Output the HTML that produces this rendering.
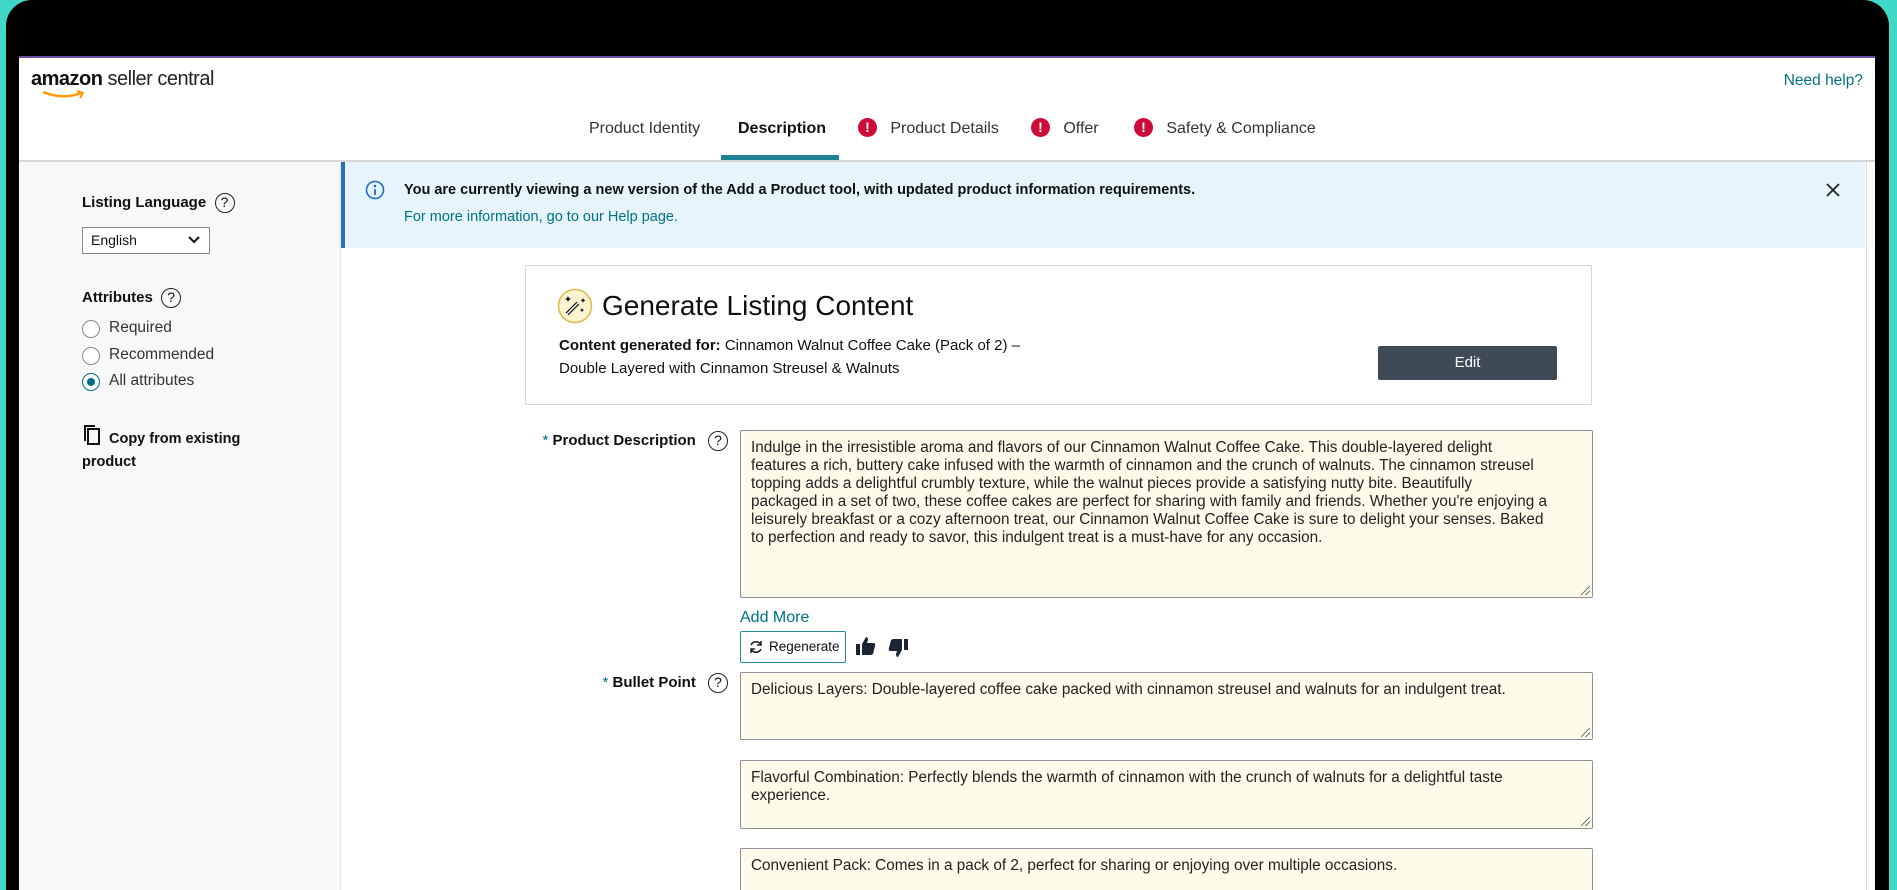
<!DOCTYPE html>
<html><head><meta charset="utf-8"><style>
*{box-sizing:border-box;margin:0;padding:0}
html,body{width:1897px;height:890px;overflow:hidden}
body{background:#40d9c8;font-family:"Liberation Sans",sans-serif;color:#0f1111;position:relative}
.frame{position:absolute;left:6px;top:0;width:1883px;height:890px;background:#000;border-radius:26px 26px 0 0}
.screen{position:absolute;left:19px;top:56px;width:1856px;height:834px;background:#fff;border-top:2px solid #6b4fa0;overflow:hidden}
.a{position:absolute;white-space:nowrap}
.hdr{position:absolute;left:0;top:0;width:1856px;height:104px;border-bottom:2px solid #d5d9d9;background:#fff}
.side{position:absolute;left:0;top:104px;width:322px;height:800px;background:#f7f8f8;border-right:1px solid #e3e6e6}
.help{display:inline-block;width:20px;height:20px;border:1.7px solid #222;border-radius:50%;font-size:14px;text-align:center;line-height:17px;font-weight:normal}
.radio{position:absolute;width:18px;height:18px;border:1.5px solid #888;border-radius:50%;background:#fff}
.alert{display:inline-block;width:19px;height:19px;border-radius:50%;background:#cc0c39;color:#fff;font-size:14px;font-weight:bold;text-align:center;line-height:19px;vertical-align:1px}
.ta{position:absolute;left:721px;width:853px;background:#fffbea;border:1.5px solid #8d9096;border-radius:2px;font-size:15.3px;line-height:18px;padding:8px 10px;white-space:nowrap;color:#222}
.ta:after{content:"";position:absolute;right:2px;bottom:2px;width:9px;height:9px;background:linear-gradient(135deg,transparent 45%,#777 46%,#777 54%,transparent 55%,transparent 70%,#777 71%,#777 78%,transparent 79%)}
.lbl{position:absolute;font-size:15px;font-weight:bold;white-space:nowrap;text-align:right}
.lbl .s{color:#007185;font-weight:normal}
</style></head><body>
<div class="frame"></div>
<div class="screen">
 <div class="hdr">
  <div class="a" style="left:12px;top:10px;font-size:20px;letter-spacing:-0.5px"><b style="font-weight:bold">amazon</b> <span style="color:#222">seller central</span></div>
  <svg class="a" style="left:22px;top:32px" width="48" height="10"><path d="M2 2 Q22 10 40 3" stroke="#f90" stroke-width="2.5" fill="none"/><path d="M36 1 L42 3 L39 8" stroke="#f90" stroke-width="2" fill="none"/></svg>
  <div class="a" style="right:12px;top:14px;font-size:15.5px;color:#007185">Need help?</div>
  <div class="a" style="left:570px;top:62px;font-size:16px;color:#333">Product Identity</div>
  <div class="a" style="left:719px;top:62px;font-size:16px;font-weight:bold">Description</div>
  <div class="a" style="left:702px;top:97px;width:118px;height:5px;background:#1d8295"></div>
  <div class="a" style="left:839px;top:60px;font-size:16px;color:#333"><span class="alert">!</span>&nbsp;&nbsp; Product Details</div>
  <div class="a" style="left:1012px;top:60px;font-size:16px;color:#333"><span class="alert">!</span>&nbsp;&nbsp; Offer</div>
  <div class="a" style="left:1115px;top:60px;font-size:16px;color:#333"><span class="alert">!</span>&nbsp;&nbsp; Safety &amp; Compliance</div>
 </div>
 <div class="side">
  <div class="a" style="left:63px;top:31px;font-size:15px;font-weight:bold">Listing Language&nbsp; <span class="help">?</span></div>
  <div class="a" style="left:63px;top:65px;width:128px;height:27px;border:1.5px solid #888;background:#fff;font-size:14px;padding:4px 8px">English<svg style="position:absolute;right:9px;top:8px" width="12" height="8"><path d="M1 1 L6 6 L11 1" stroke="#111" stroke-width="2" fill="none"/></svg></div>
  <div class="a" style="left:63px;top:126px;font-size:15px;font-weight:bold">Attributes&nbsp; <span class="help">?</span></div>
  <div class="radio" style="left:63px;top:158px"></div><div class="a" style="left:90px;top:157px;font-size:15.5px;color:#333">Required</div>
  <div class="radio" style="left:63px;top:185px"></div><div class="a" style="left:90px;top:184px;font-size:15.5px;color:#333">Recommended</div>
  <div class="radio" style="left:63px;top:211px;border-color:#007185"><div style="position:absolute;left:3.5px;top:3.5px;width:8px;height:8px;border-radius:50%;background:#007185"></div></div><div class="a" style="left:90px;top:210px;font-size:15.5px;color:#333">All attributes</div>
  <svg class="a" style="left:64px;top:262px" width="18" height="22"><rect x="5" y="5" width="11" height="15" fill="none" stroke="#111" stroke-width="2"/><path d="M2 17 V2 H12" fill="none" stroke="#111" stroke-width="2"/></svg>
  <div class="a" style="left:90px;top:269px;font-size:14.5px;font-weight:bold">Copy from existing</div>
  <div class="a" style="left:63px;top:292px;font-size:14.5px;font-weight:bold">product</div>
 </div>
 <div class="a" style="left:322px;top:104px;width:1524px;height:86px;background:#e6f4fb;border-left:4px solid #2a6fc0"></div>
 <svg class="a" style="left:346px;top:122px" width="20" height="20"><circle cx="10" cy="10" r="8.5" fill="none" stroke="#1f6fc0" stroke-width="1.6"/><circle cx="10" cy="6" r="1.3" fill="#1f6fc0"/><path d="M10 9 V15" stroke="#1f6fc0" stroke-width="1.8"/></svg>
 <div class="a" style="left:385px;top:124px;font-size:14.5px;font-weight:bold">You are currently viewing a new version of the Add a Product tool, with updated product information requirements.</div>
 <div class="a" style="left:385px;top:151px;font-size:14.5px;color:#007185">For more information, go to our Help page.</div>
 <svg class="a" style="left:1806px;top:124px" width="16" height="16"><path d="M2 2 L14 14 M14 2 L2 14" stroke="#222" stroke-width="1.8"/></svg>
 <div class="a" style="left:1847px;top:104px;width:1px;height:800px;background:#ddd"></div>
 <div class="a" style="left:506px;top:207px;width:1067px;height:140px;border:1.5px solid #d5d9d9"></div>
 <svg class="a" style="left:538px;top:230px" width="36" height="36"><circle cx="18" cy="18" r="16.5" fill="#fdf3d0" stroke="#e0b84c" stroke-width="1.5"/><path d="M10 26 L21 15" stroke="#111" stroke-width="4"/><path d="M10 26 L21 15" stroke="#fff" stroke-width="1.5"/><path d="M11 8 l1 2 2 1 -2 1 -1 2 -1 -2 -2 -1 2 -1z M26 10 l.8 1.6 1.6.8 -1.6.8 -.8 1.6 -.8 -1.6 -1.6 -.8 1.6 -.8z M25 20 l.7 1.4 1.4.7 -1.4.7 -.7 1.4 -.7 -1.4 -1.4 -.7 1.4 -.7z" fill="#111"/></svg>
 <div class="a" style="left:583px;top:232px;font-size:28px;color:#0f1111">Generate Listing Content</div>
 <div class="a" style="left:540px;top:279px;font-size:15px"><b>Content generated for:</b> Cinnamon Walnut Coffee Cake (Pack of 2) –</div>
 <div class="a" style="left:540px;top:302px;font-size:15px">Double Layered with Cinnamon Streusel &amp; Walnuts</div>
 <div class="a" style="left:1359px;top:288px;width:179px;height:34px;background:#3f4a57;color:#fff;font-size:15px;text-align:center;line-height:34px;border-radius:2px">Edit</div>
 <div class="lbl" style="right:1175px;top:374px"><span class="s">*</span> Product Description&nbsp;</div><span class="help a" style="left:689px;top:373px">?</span>
 <div class="ta" style="top:372px;height:168px">Indulge in the irresistible aroma and flavors of our Cinnamon Walnut Coffee Cake. This double-layered delight<br>features a rich, buttery cake infused with the warmth of cinnamon and the crunch of walnuts. The cinnamon streusel<br>topping adds a delightful crumbly texture, while the walnut pieces provide a satisfying nutty bite. Beautifully<br>packaged in a set of two, these coffee cakes are perfect for sharing with family and friends. Whether you're enjoying a<br>leisurely breakfast or a cozy afternoon treat, our Cinnamon Walnut Coffee Cake is sure to delight your senses. Baked<br>to perfection and ready to savor, this indulgent treat is a must-have for any occasion.</div>
 <div class="a" style="left:721px;top:551px;font-size:16px;color:#007185">Add More</div>
 <div class="a" style="left:721px;top:573px;width:106px;height:32px;border:1.5px solid #2b8a9a;border-radius:2px;font-size:13.5px;line-height:29px;padding-left:28px;color:#111">Regenerate</div>
 <svg class="a" style="left:729px;top:581px" width="16" height="16"><path d="M13 6 A5.5 5.5 0 0 0 3 6 M3 10 A5.5 5.5 0 0 0 13 10" fill="none" stroke="#222" stroke-width="1.6"/><path d="M13 2 V6 H9 M3 14 V10 H7" fill="none" stroke="#222" stroke-width="1.6"/></svg>
 <svg class="a" style="left:835px;top:576px" width="24" height="24"><path d="M2 10 H6 V21 H2Z M8 10 L12 3 Q14 3 14 6 L13 9 H20 Q22 10 21 12 L19 20 Q18 21 16 21 H8Z" fill="#1b2433"/></svg>
 <svg class="a" style="left:867px;top:578px" width="24" height="24"><g transform="rotate(180 12 12)"><path d="M2 10 H6 V21 H2Z M8 10 L12 3 Q14 3 14 6 L13 9 H20 Q22 10 21 12 L19 20 Q18 21 16 21 H8Z" fill="#1b2433"/></g></svg>
 <div class="lbl" style="right:1175px;top:616px"><span class="s">*</span> Bullet Point&nbsp;</div><span class="help a" style="left:689px;top:615px">?</span>
 <div class="ta" style="top:614px;height:68px">Delicious Layers: Double-layered coffee cake packed with cinnamon streusel and walnuts for an indulgent treat.</div>
 <div class="ta" style="top:702px;height:69px">Flavorful Combination: Perfectly blends the warmth of cinnamon with the crunch of walnuts for a delightful taste<br>experience.</div>
 <div class="ta" style="top:790px;height:69px">Convenient Pack: Comes in a pack of 2, perfect for sharing or enjoying over multiple occasions.</div>
</div>
</body></html>
